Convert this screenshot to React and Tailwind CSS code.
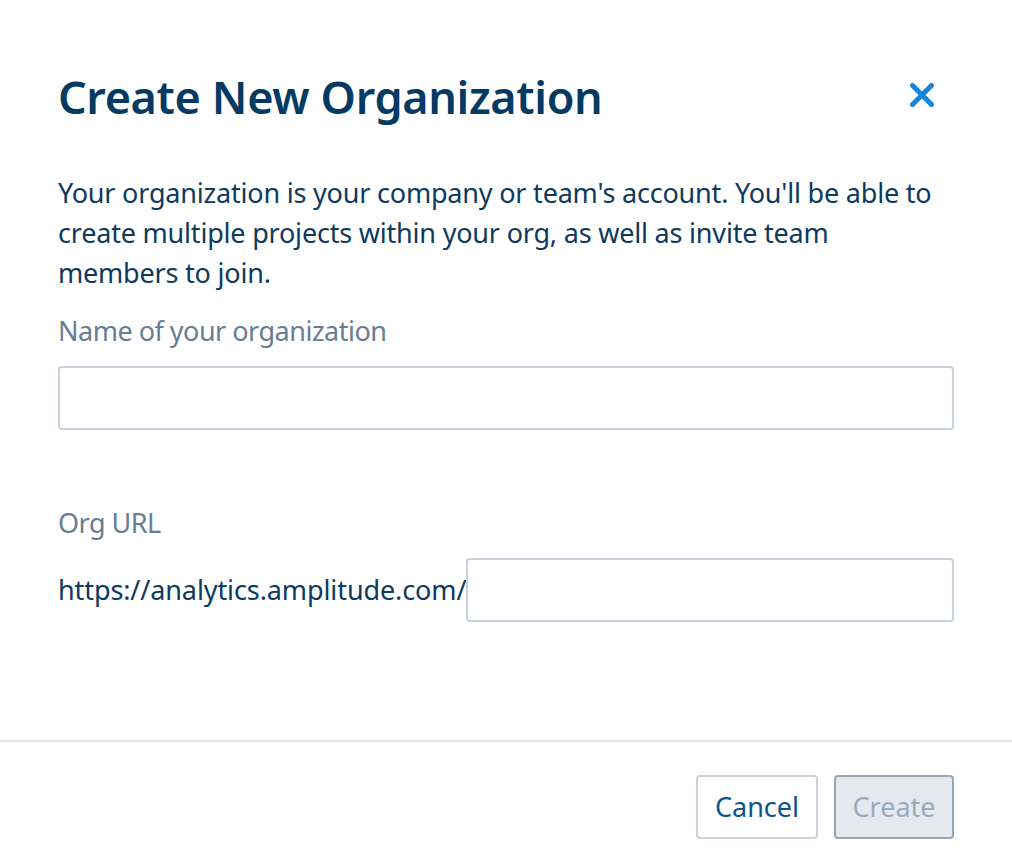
export default function App() {
  const font = { fontFamily: '"Noto Sans", "Open Sans", sans-serif' };
  return (
    <div className="w-[1012px] h-[866px] bg-white flex flex-col text-[#0d3a5e]" style={font}>
      <div className="px-[58px] pt-[69px] flex items-center justify-between">
        <h1 className="text-[45px] leading-[56px] font-semibold text-[#053a62] tracking-[-0.35px]">
          Create New Organization
        </h1>
        <button className="w-[40px] h-[40px] mr-[12px] -mt-[4px] flex items-center justify-center text-[#1a85d8]">
          <svg width="26" height="26" viewBox="0 0 26 26" fill="none" stroke="currentColor" strokeWidth="5" strokeLinecap="round">
            <path d="M3.5 3.5 L22.5 22.5 M22.5 3.5 L3.5 22.5" />
          </svg>
        </button>
      </div>
      <div className="px-[58px]">
        <p className="mt-[48px] text-[27px] leading-[40px] text-[#0d3a5e] tracking-[-0.2px]">
          Your organization is your company or team's account. You'll be able to create multiple projects within your org, as well as invite team members to join.
        </p>
        <div className="mt-[18px] text-[27px] leading-[40px] text-[#687d94] tracking-[-0.5px]">Name of your organization</div>
        <input className="mt-[15px] block w-full h-[64px] border-2 border-[#c8d2dc] rounded-[4px] outline-none px-3 text-[24px]" />
        <div className="mt-[73px] text-[27px] leading-[40px] text-[#687d94] tracking-[-0.5px]">Org URL</div>
        <div className="mt-[15px] flex items-center h-[64px]">
          <span className="text-[27px] leading-[40px] text-[#0d3a5e] tracking-[-0.1px]">https://analytics.amplitude.com/</span>
          <input className="flex-1 h-[64px] border-2 border-[#c8d2dc] rounded-[4px] outline-none px-3 text-[24px]" />
        </div>
      </div>
      <div className="flex-1" />
      <div className="border-t-2 border-[#e3e8ee] flex justify-end gap-[16px] pr-[58px] pt-[33px] pb-[27px]">
        <button className="h-[64px] w-[122px] border-2 border-[#c8d2dc] rounded-[4px] bg-white text-[27px] text-[#0b5488]">
          Cancel
        </button>
        <button className="h-[64px] w-[120px] border-2 border-[#97a6b6] rounded-[4px] bg-[#e5e9ee] text-[27px] text-[#9aabbd]">
          Create
        </button>
      </div>
    </div>
  );
}
